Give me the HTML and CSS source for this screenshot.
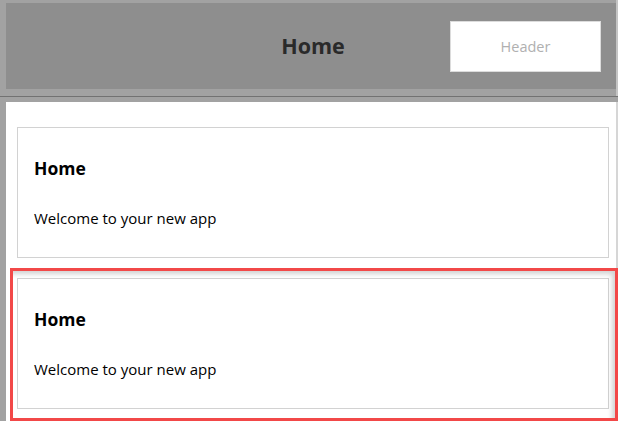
FILE: index.html
```html
<!DOCTYPE html>
<html>
<head>
<meta charset="utf-8">
<link rel="stylesheet" href="styles.css">
</head>
<body>
<div class="frame">
  <div class="header-wrap">
    <header class="header">
      <div class="spacer"></div>
      <h1 class="title">Home</h1>
      <button class="header-btn">Header</button>
    </header>
  </div>
  <div class="rule"></div>
  <main class="content">
    <section class="card">
      <h2 class="card-title">Home</h2>
      <p class="card-text">Welcome to your new app</p>
    </section>
    <section class="card">
      <h2 class="card-title">Home</h2>
      <p class="card-text">Welcome to your new app</p>
    </section>
    <div class="selection"></div>
  </main>
</div>
</body>
</html>
```

FILE: styles.css
```css
* { box-sizing: border-box; }
html, body { margin: 0; padding: 0; }
body {
  width: 618px;
  height: 421px;
  overflow: hidden;
  font-family: "Open Sans", "Noto Sans", sans-serif;
  background: #a2a2a2;
}
.frame {
  display: flex;
  flex-direction: column;
  height: 421px;
  background: #a2a2a2;
}
.header-wrap {
  padding: 3px 0 0 6px;
  height: 96px;
  border-right: 2px solid #c4c4c4;
}
.header {
  height: 86px;
  background: #8e8e8e;
  display: grid;
  grid-template-columns: 1fr auto 1fr;
  align-items: center;
}
.title {
  margin: 0 0 2px 0;
  font-size: 21.5px;
  font-weight: 700;
  color: #2a2a2a;
  padding-left: 4px;
}
.header-btn {
  justify-self: end;
  margin-right: 15px;
  width: 151px;
  height: 51px;
  background: #fff;
  border: 1px solid #dcdcdc;
  font-family: "Open Sans", "Noto Sans", sans-serif;
  font-size: 14.5px;
  color: #b0b0b0;
  padding: 0;
  margin-top: 1px;
}
.rule {
  height: 1px;
  background: #727272;
  margin-bottom: 5px;
}
.content {
  position: relative;
  flex: 1;
  margin-left: 6px;
  background: #fff;
  padding: 25px 7px 0 11px;
  display: flex;
  flex-direction: column;
  gap: 20px;
  border-right: 2px solid #d6d6d6;
}
.card {
  border: 1px solid #d2d2d2;
  height: 131px;
  padding: 28px 16px 0 16px;
  background: #fff;
}
.card-title {
  margin: 0;
  font-size: 17.5px;
  line-height: 24px;
  font-weight: 700;
  color: #000;
}
.card-text {
  margin: 28px 0 0 0;
  font-size: 15px;
  line-height: 20px;
  color: #000;
}
.selection {
  position: absolute;
  left: 4px;
  top: 166px;
  width: 608px;
  height: 153px;
  border: 3px solid #f24848;
  box-shadow: inset -5px 5px 5px -2px rgba(0,0,0,0.18);
  pointer-events: none;
}
```
